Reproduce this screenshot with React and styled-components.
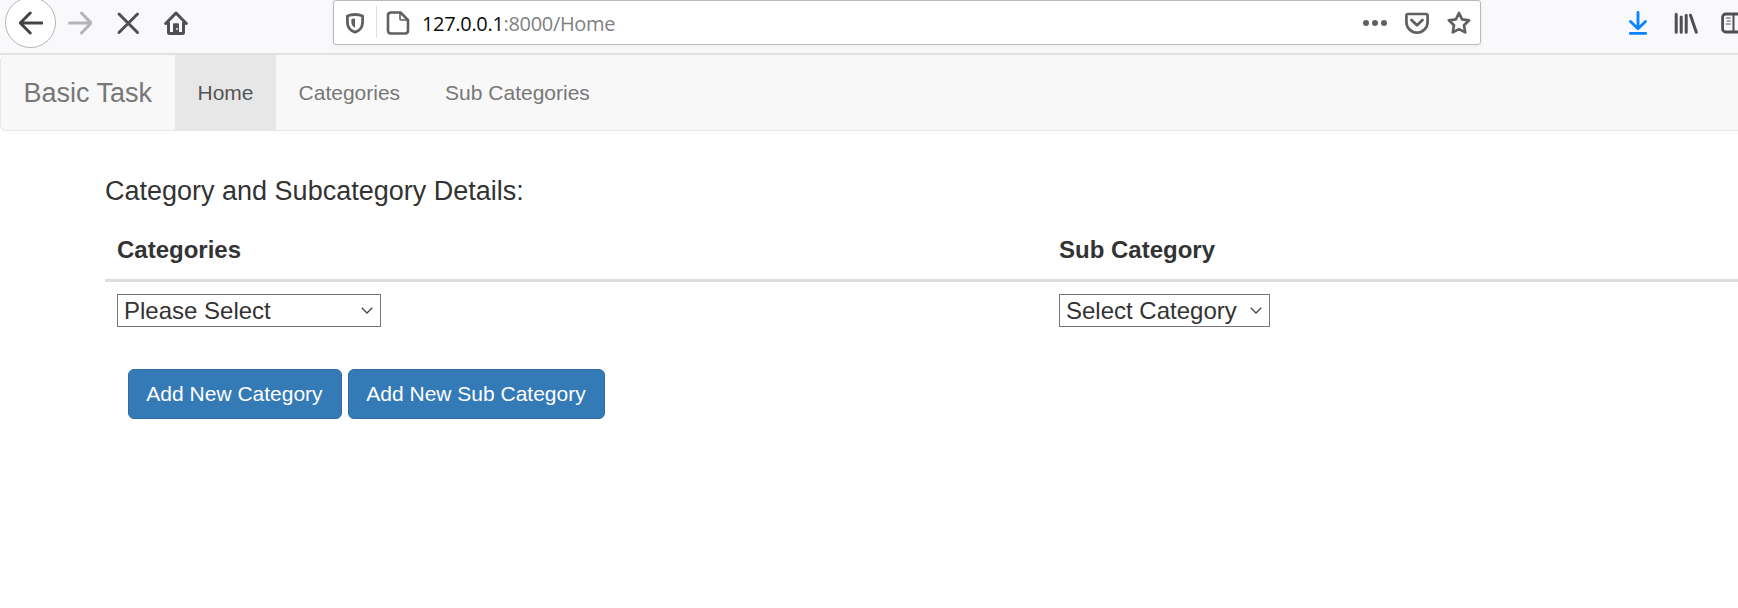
import React from "react";
import styled, { createGlobalStyle } from "styled-components";

const GlobalStyle = createGlobalStyle`
  * { box-sizing: border-box; }
  html, body { margin: 0; padding: 0; overflow: hidden; background: #fff; }
  body { font-family: "Liberation Sans", Arial, sans-serif; font-size: 21px; color: #333; }
`;

const Page = styled.div`
  width: 100%;
  height: 608px;
  overflow: hidden;
`;

const Toolbar = styled.header`
  display: flex;
  align-items: flex-start;
  height: 55px;
  background: #f9f9fb;
  border-bottom: 2px solid #e1e1e2;
  overflow: hidden;
`;

const BackButton = styled.div`
  flex: none;
  width: 51px;
  height: 51px;
  margin: -3px 0 0 5px;
  border: 1px solid #b5b5b8;
  border-radius: 50%;
  background: #fff;
  display: flex;
  align-items: center;
  justify-content: center;
`;

const Icon = styled.svg`
  flex: none;
  width: 24px;
  height: 24px;
  margin-left: ${(p) => p.$gap || 0}px;
  margin-top: ${(p) => p.$top || 0}px;
  color: ${(p) => p.$color || "#4f4f52"};
  fill: none;
  stroke: currentColor;
  stroke-width: 3;
  stroke-linecap: round;
  stroke-linejoin: round;
`;

const AddressBar = styled.div`
  flex: none;
  display: flex;
  align-items: flex-start;
  width: 1148px;
  height: 45px;
  margin-left: 145px;
  padding-right: 9px;
  background: #fff;
  border: 1px solid #b9b9bc;
  border-radius: 3px;
  box-shadow: 0 1px 4px rgba(0, 0, 0, 0.06);
`;

const Separator = styled.div`
  width: 1px;
  height: 32px;
  margin: 5px 0 0 9px;
  background: #dedee0;
`;

const Address = styled.div`
  flex: 1;
  margin-left: 12px;
  font-family: "Open Sans", "Noto Sans", sans-serif;
  font-size: 20px;
  line-height: 45px;
  letter-spacing: -0.32px;
  color: #808083;
  white-space: nowrap;
`;

const Host = styled.span`
  color: #0c0c0d;
`;

const Navbar = styled.nav`
  display: flex;
  height: 76px;
  background: #f8f8f8;
  border: 1px solid #e7e7e7;
  border-top: 0;
  border-right: 0;
  border-radius: 6px 0 0 6px;
`;

const Brand = styled.a`
  width: 174px;
  padding-left: 22.5px;
  font-size: 27px;
  line-height: 77px;
  color: #777;
  white-space: nowrap;
`;

const NavLink = styled.a`
  padding: 0 22.5px;
  line-height: 75px;
  color: ${(p) => (p.$active ? "#555" : "#777")};
  background: ${(p) => (p.$active ? "#e7e7e7" : "transparent")};
  white-space: nowrap;
`;

const Main = styled.main`
  width: 1895px;
  padding: 44px 0 0 105px;
`;

const Title = styled.h4`
  margin: 0;
  font-size: 27px;
  font-weight: 400;
  line-height: 32px;
`;

const DetailsTable = styled.div`
  margin-top: 19px;
  font-size: 24px;
`;

const TableRow = styled.div`
  display: grid;
  grid-template-columns: 942px 1fr;
  padding: 12px;
  ${(p) => p.$head && "height: 56px; padding-top: 5px; line-height: 37px; font-weight: 700; border-bottom: 3px solid #ddd;"}
`;

const SelectBox = styled.div`
  display: flex;
  align-items: center;
  justify-content: space-between;
  width: ${(p) => p.$width}px;
  height: 33px;
  padding: 0 7px 0 6px;
  border: 1px solid #77777b;
  background: #fff;
  line-height: 31px;
  white-space: nowrap;
`;

const Chevron = styled.svg`
  width: 12px;
  height: 7px;
  fill: none;
  stroke: #444;
  stroke-width: 1.3;
`;

const Actions = styled.div`
  display: flex;
  gap: 6px;
  margin: 30px 0 0 23px;
`;

const Button = styled.button`
  width: ${(p) => p.$width}px;
  height: 50px;
  padding: 0 1px 0 0;
  border: 1px solid #2e6da4;
  border-radius: 6px;
  background: #337ab7;
  color: #fff;
  font: 21px "Liberation Sans", Arial, sans-serif;
  white-space: nowrap;
`;

function Select({ label, width }) {
  return (
    <SelectBox $width={width}>
      <span>{label}</span>
      <Chevron viewBox="0 0 12 7">
        <path d="M.8.8 6 6 11.2.8" />
      </Chevron>
    </SelectBox>
  );
}

export default function App() {
  return (
    <Page>
      <GlobalStyle />
      <Toolbar>
        <BackButton>
          <Icon viewBox="0 0 24 24" $color="#454548">
            <path d="M23.2 12H1.5M11.2 2 1.2 12l10 10" />
          </Icon>
        </BackButton>
        <Icon viewBox="0 0 24 24" $gap={12} $top={11} $color="#b5b5b7">
          <path d="M1.5 12H22M13.5 2l9.5 10-9.5 10" />
        </Icon>
        <Icon viewBox="0 0 24 24" $gap={24} $top={11}>
          <path d="m3 3 18.5 18.5M21.5 3 3 21.5" />
        </Icon>
        <Icon viewBox="0 0 24 24" $gap={24} $top={11}>
          <path d="M1.7 12.5 12 2l10.3 10.5M4.5 12v9.5q0 1 1 1h13q1 0 1-1V12" />
          <path d="M9 13.2q0-1 1-1h4q1 0 1 1V22H9z" fill="currentColor" stroke="none" />
          <path d="M13 17.5v1" stroke="#f9f9fb" strokeWidth="1.3" />
        </Icon>
        <AddressBar>
          <Icon viewBox="0 0 24 24" $gap={9} $top={10} $color="#606063">
            <path d="M12 3.5c3 0 5.5.6 7.6 1.6v6.2c0 5-3 8.4-7.6 9.8-4.6-1.4-7.6-4.8-7.6-9.8V5.1c2.1-1 4.6-1.6 7.6-1.6z" strokeWidth="2.8" />
            <path d="M12 7.5v9.3c-2.4-1.2-3.6-3.1-3.6-5.9V8.1Q10 7.5 12 7.5z" fill="currentColor" stroke="none" />
          </Icon>
          <Separator />
          <Icon viewBox="0 0 24 24" $gap={9} $top={10} $color="#606063">
            <path d="M5 1.5h9.5L22 9v10.5q0 3-3 3H5q-3 0-3-3v-15q0-3 3-3z" strokeWidth="2.6" />
            <path d="M14 2v6q0 1 1 1h6" strokeWidth="1.6" />
          </Icon>
          <Address>
            <Host>127.0.0.1</Host>:8000/Home
          </Address>
          <Icon viewBox="0 0 24 24" $top={10} $color="#606063">
            <g fill="currentColor" stroke="none">
              <circle cx="3" cy="12" r="3" />
              <circle cx="12" cy="12" r="3" />
              <circle cx="21" cy="12" r="3" />
            </g>
          </Icon>
          <Icon viewBox="0 0 24 24" $gap={18} $top={10} $color="#606063">
            <path d="M3 3h18q1.6 0 1.6 1.6V11a10.6 10.6 0 0 1-21.2 0V4.6Q1.4 3 3 3z" strokeWidth="2.7" />
            <path d="m6.5 9 5.5 5.2L17.5 9" strokeWidth="2.8" />
          </Icon>
          <Icon viewBox="0 0 24 24" $gap={18} $top={10} $color="#606063">
            <path
              d="m12 2 3.1 6.3 7 1-5.1 5 1.2 7.1-6.2-3.3-6.2 3.3L7 14.3l-5.1-5 7-1z"
              strokeWidth="2.7"
            />
          </Icon>
        </AddressBar>
        <Icon viewBox="0 0 24 24" $gap={145} $top={11} $color="#0a84ff">
          <path d="M12 1.5v16M4.5 10.5l7.5 7.3 7.5-7.3M4.3 22.4h15.4" strokeWidth="2.9" />
        </Icon>
        <Icon viewBox="0 0 24 24" $gap={24} $top={11}>
          <path d="M2.2 3.2v18M7.2 6v15.2M12.2 4.2v17M16.5 4.2l5.8 17" strokeWidth="3" />
        </Icon>
        <Icon viewBox="0 0 24 24" $gap={23} $top={11}>
          <rect x="1.6" y="3" width="22" height="18" rx="3" strokeWidth="2.8" />
          <path d="M12.5 3v18" strokeWidth="2" />
          <path d="M5.2 7h4M6.2 10h3M5.2 13h4" strokeWidth="1.2" />
        </Icon>
      </Toolbar>
      <Navbar>
        <Brand>Basic Task</Brand>
        <NavLink $active>Home</NavLink>
        <NavLink>Categories</NavLink>
        <NavLink>Sub Categories</NavLink>
      </Navbar>
      <Main>
        <Title>Category and Subcategory Details:</Title>
        <DetailsTable>
          <TableRow $head>
            <span>Categories</span>
            <span>Sub Category</span>
          </TableRow>
          <TableRow>
            <Select label="Please Select" width={264} />
            <Select label="Select Category" width={211} />
          </TableRow>
        </DetailsTable>
        <Actions>
          <Button $width={214}>Add New Category</Button>
          <Button $width={257}>Add New Sub Category</Button>
        </Actions>
      </Main>
    </Page>
  );
}
